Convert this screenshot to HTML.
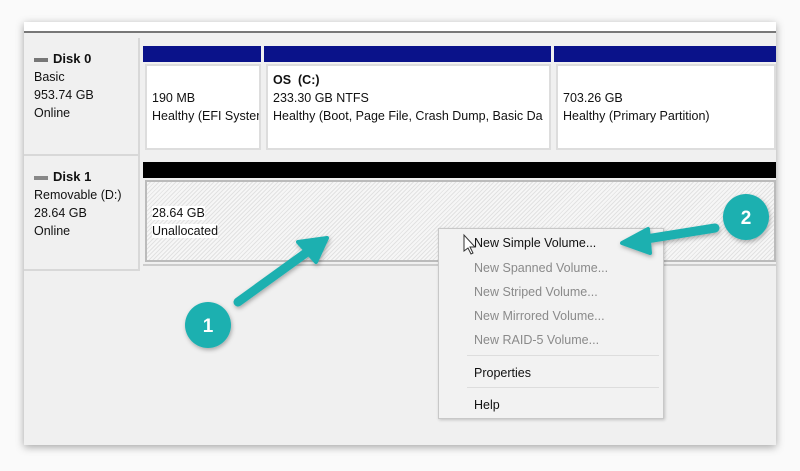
<!DOCTYPE html>
<html><head><style>
*{margin:0;padding:0;box-sizing:border-box}
body{width:800px;height:471px;background:#fafafa;position:relative;overflow:hidden;font-family:"Liberation Sans",sans-serif;font-size:12.5px;color:#111}
.win{position:absolute;left:24px;top:22px;width:752px;height:423px;background:#f0f0f0;box-shadow:0 2px 8px rgba(0,0,0,.35)}
.a{position:absolute}
.lbl{position:absolute;left:0;width:116px;background:#f0f0f0;border-right:2px solid #d8d8d8;border-bottom:2px solid #d8d8d8;padding:12px 0 0 10px;line-height:18px}
.box{position:absolute;background:#fff;border:2px solid #ddd;padding-left:5px;line-height:18px;overflow:hidden;white-space:nowrap}
.hat{background:repeating-linear-gradient(135deg,#f6f6f6 0 2px,#e2e2e2 2px 3px)}
.menu{position:absolute;left:438px;top:228px;width:226px;height:191px;background:#f2f2f2;border:1px solid #c8c8c8;box-shadow:1px 1px 3px rgba(0,0,0,.2);font-size:12.5px}
.mi{position:absolute;left:35px}
.g{color:#8a8a8a}
.sep{position:absolute;left:28px;right:4px;height:1px;background:#ddd}
</style></head><body>
<div class="win">
<div class="a" style="left:0;top:0;width:752px;height:11px;background:#fff;border-bottom:2px solid #777"></div>
<div class="lbl" style="top:16px;height:118px"><b style="font-size:13px"><span style="display:inline-block;width:14px;height:4px;background:#777;margin-right:5px;vertical-align:middle"></span>Disk 0</b><br>Basic<br>953.74 GB<br>Online</div>
<div class="lbl" style="top:134px;height:115px"><b style="font-size:13px"><span style="display:inline-block;width:14px;height:4px;background:#888;margin-right:5px;vertical-align:middle"></span>Disk 1</b><br>Removable (D:)<br>28.64 GB<br>Online</div>
</div>
<div class="a" style="left:143px;top:46px;width:118px;height:16px;background:#0a128a"></div>
<div class="a" style="left:264px;top:46px;width:287px;height:16px;background:#0a128a"></div>
<div class="a" style="left:554px;top:46px;width:222px;height:16px;background:#0a128a"></div>
<div class="box" style="left:145px;top:64px;width:116px;height:86px;padding-top:23px">190 MB<br>Healthy (EFI Syster</div>
<div class="box" style="left:266px;top:64px;width:285px;height:86px;padding-top:5px"><b>OS&nbsp; (C:)</b><br>233.30 GB NTFS<br>Healthy (Boot, Page File, Crash Dump, Basic Da</div>
<div class="box" style="left:556px;top:64px;width:220px;height:86px;padding-top:23px">703.26 GB<br>Healthy (Primary Partition)</div>
<div class="a" style="left:143px;top:162px;width:633px;height:16px;background:#000"></div>
<div class="box hat" style="left:145px;top:180px;width:631px;height:82px;border-color:#bbb;padding-top:22px"><span style="background:#fff">28.64 GB</span><br><span style="background:#fff">Unallocated</span></div>
<div class="a" style="left:143px;top:264px;width:633px;height:2px;background:#ccc"></div>
<div class="menu">
<div class="mi" style="top:7px">New Simple Volume...</div>
<div class="mi g" style="top:32px">New Spanned Volume...</div>
<div class="mi g" style="top:56px">New Striped Volume...</div>
<div class="mi g" style="top:80px">New Mirrored Volume...</div>
<div class="mi g" style="top:104px">New RAID-5 Volume...</div>
<div class="sep" style="top:126px"></div>
<div class="mi" style="top:137px">Properties</div>
<div class="sep" style="top:158px"></div>
<div class="mi" style="top:169px">Help</div>
</div>
<svg class="a" style="left:0;top:0" width="800" height="471">
<defs><filter id="s"><feDropShadow dx="1" dy="2" stdDeviation="2" flood-opacity=".3"/></filter></defs>
<path d="M464 235 L464 251 L468 248 L471 254 L473 253 L470 247 L475 247 Z" fill="#fff" stroke="#333" stroke-width="1"/>
<g fill="#1fb0b0" filter="url(#s)">
<line x1="238" y1="302" x2="310" y2="250" stroke="#1fb0b0" stroke-width="9" stroke-linecap="round"/>
<path d="M327 238 L298 242 L316 262 Z" stroke="#1fb0b0" stroke-width="4" stroke-linejoin="round"/>
<circle cx="208" cy="325" r="23"/>
<line x1="715" y1="228" x2="640" y2="240" stroke="#1fb0b0" stroke-width="9" stroke-linecap="round"/>
<path d="M622 243 L648 229 L650 253 Z" stroke="#1fb0b0" stroke-width="4" stroke-linejoin="round"/>
<circle cx="746" cy="217" r="23"/>
</g>
<text x="208" y="332" fill="#fff" font-family="Liberation Sans" font-weight="bold" font-size="19" text-anchor="middle">1</text>
<text x="746" y="224" fill="#fff" font-family="Liberation Sans" font-weight="bold" font-size="19" text-anchor="middle">2</text>
</svg>
</body></html>
